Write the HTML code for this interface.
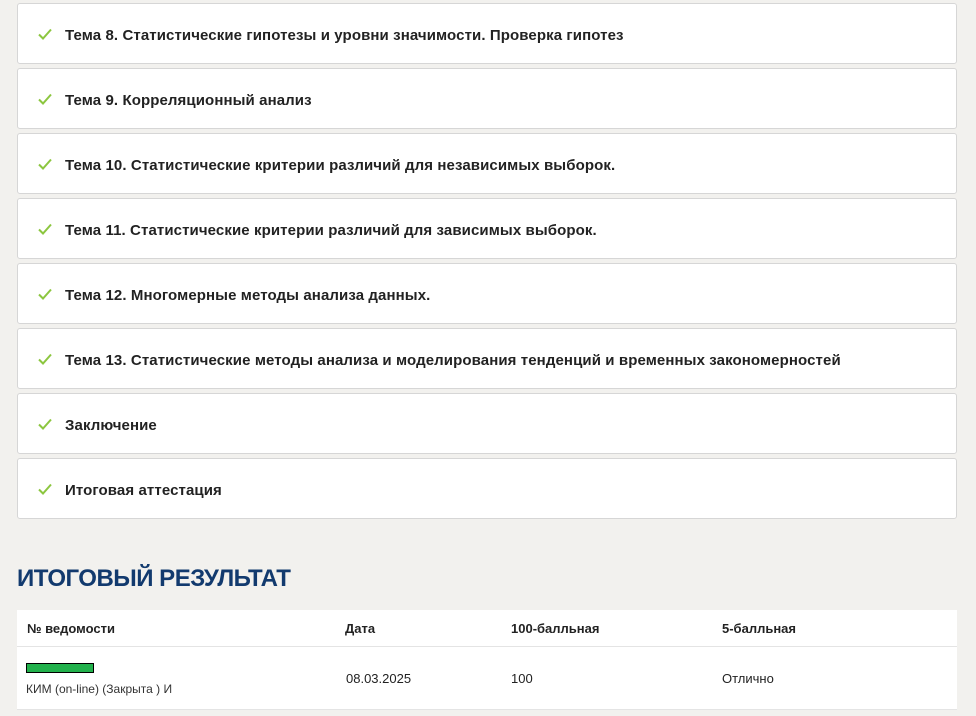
<!DOCTYPE html>
<html><head><meta charset="utf-8"><style>
body{margin:0;background:#f2f1ee;font-family:"Liberation Sans",sans-serif;width:976px;height:716px;overflow:hidden;position:relative}
.card{position:absolute;left:17px;width:938px;height:59px;background:#fff;border:1px solid #d6d6d6;border-radius:3px}
.card svg{position:absolute;left:20px;top:24px}
.card span{position:absolute;left:47px;top:23px;font-size:15px;font-weight:bold;color:#222;letter-spacing:0.1px}
h2{position:absolute;left:17px;top:565px;margin:0;font-size:24px;font-weight:bold;color:#123a6e;letter-spacing:-0.5px}
.tbl{position:absolute;left:17px;top:610px;width:940px;height:100px;background:#fff}
.hdr{position:absolute;top:0;height:36px;width:940px;border-bottom:1px solid #e4e4e4}
.t{position:absolute;font-size:13px;color:#222}
.b{font-weight:bold}
</style></head><body>
<div class="card" style="top:3px"><svg width="14" height="12" viewBox="0 0 14 12"><path d="M1 6.5l4 4L13 1.5" fill="none" stroke="#8cc63f" stroke-width="2"/></svg><span>Тема 8. Статистические гипотезы и уровни значимости. Проверка гипотез</span></div>
<div class="card" style="top:68px"><svg width="14" height="12" viewBox="0 0 14 12"><path d="M1 6.5l4 4L13 1.5" fill="none" stroke="#8cc63f" stroke-width="2"/></svg><span>Тема 9. Корреляционный анализ</span></div>
<div class="card" style="top:133px"><svg width="14" height="12" viewBox="0 0 14 12"><path d="M1 6.5l4 4L13 1.5" fill="none" stroke="#8cc63f" stroke-width="2"/></svg><span>Тема 10. Статистические критерии различий для независимых выборок.</span></div>
<div class="card" style="top:198px"><svg width="14" height="12" viewBox="0 0 14 12"><path d="M1 6.5l4 4L13 1.5" fill="none" stroke="#8cc63f" stroke-width="2"/></svg><span>Тема 11. Статистические критерии различий для зависимых выборок.</span></div>
<div class="card" style="top:263px"><svg width="14" height="12" viewBox="0 0 14 12"><path d="M1 6.5l4 4L13 1.5" fill="none" stroke="#8cc63f" stroke-width="2"/></svg><span>Тема 12. Многомерные методы анализа данных.</span></div>
<div class="card" style="top:328px"><svg width="14" height="12" viewBox="0 0 14 12"><path d="M1 6.5l4 4L13 1.5" fill="none" stroke="#8cc63f" stroke-width="2"/></svg><span>Тема 13. Статистические методы анализа и моделирования тенденций и временных закономерностей</span></div>
<div class="card" style="top:393px"><svg width="14" height="12" viewBox="0 0 14 12"><path d="M1 6.5l4 4L13 1.5" fill="none" stroke="#8cc63f" stroke-width="2"/></svg><span>Заключение</span></div>
<div class="card" style="top:458px"><svg width="14" height="12" viewBox="0 0 14 12"><path d="M1 6.5l4 4L13 1.5" fill="none" stroke="#8cc63f" stroke-width="2"/></svg><span>Итоговая аттестация</span></div>
<h2>ИТОГОВЫЙ РЕЗУЛЬТАТ</h2>
<div class="tbl">
<div class="hdr"></div>
<div class="t b" style="left:10px;top:11px">№ ведомости</div>
<div class="t b" style="left:328px;top:11px">Дата</div>
<div class="t b" style="left:494px;top:11px">100-балльная</div>
<div class="t b" style="left:705px;top:11px">5-балльная</div>
<div style="position:absolute;left:9px;top:53px;width:66px;height:8px;background:#22b14c;border:1px solid #000"></div>
<div class="t" style="left:9px;top:72px;font-size:12px;color:#333">КИМ (on-line) (Закрыта ) И</div>
<div class="t" style="left:329px;top:61px">08.03.2025</div>
<div class="t" style="left:494px;top:61px">100</div>
<div class="t" style="left:705px;top:61px">Отлично</div>
<div style="position:absolute;left:0;top:99px;width:940px;height:1px;background:#e4e4e4"></div>
</div>
</body></html>
